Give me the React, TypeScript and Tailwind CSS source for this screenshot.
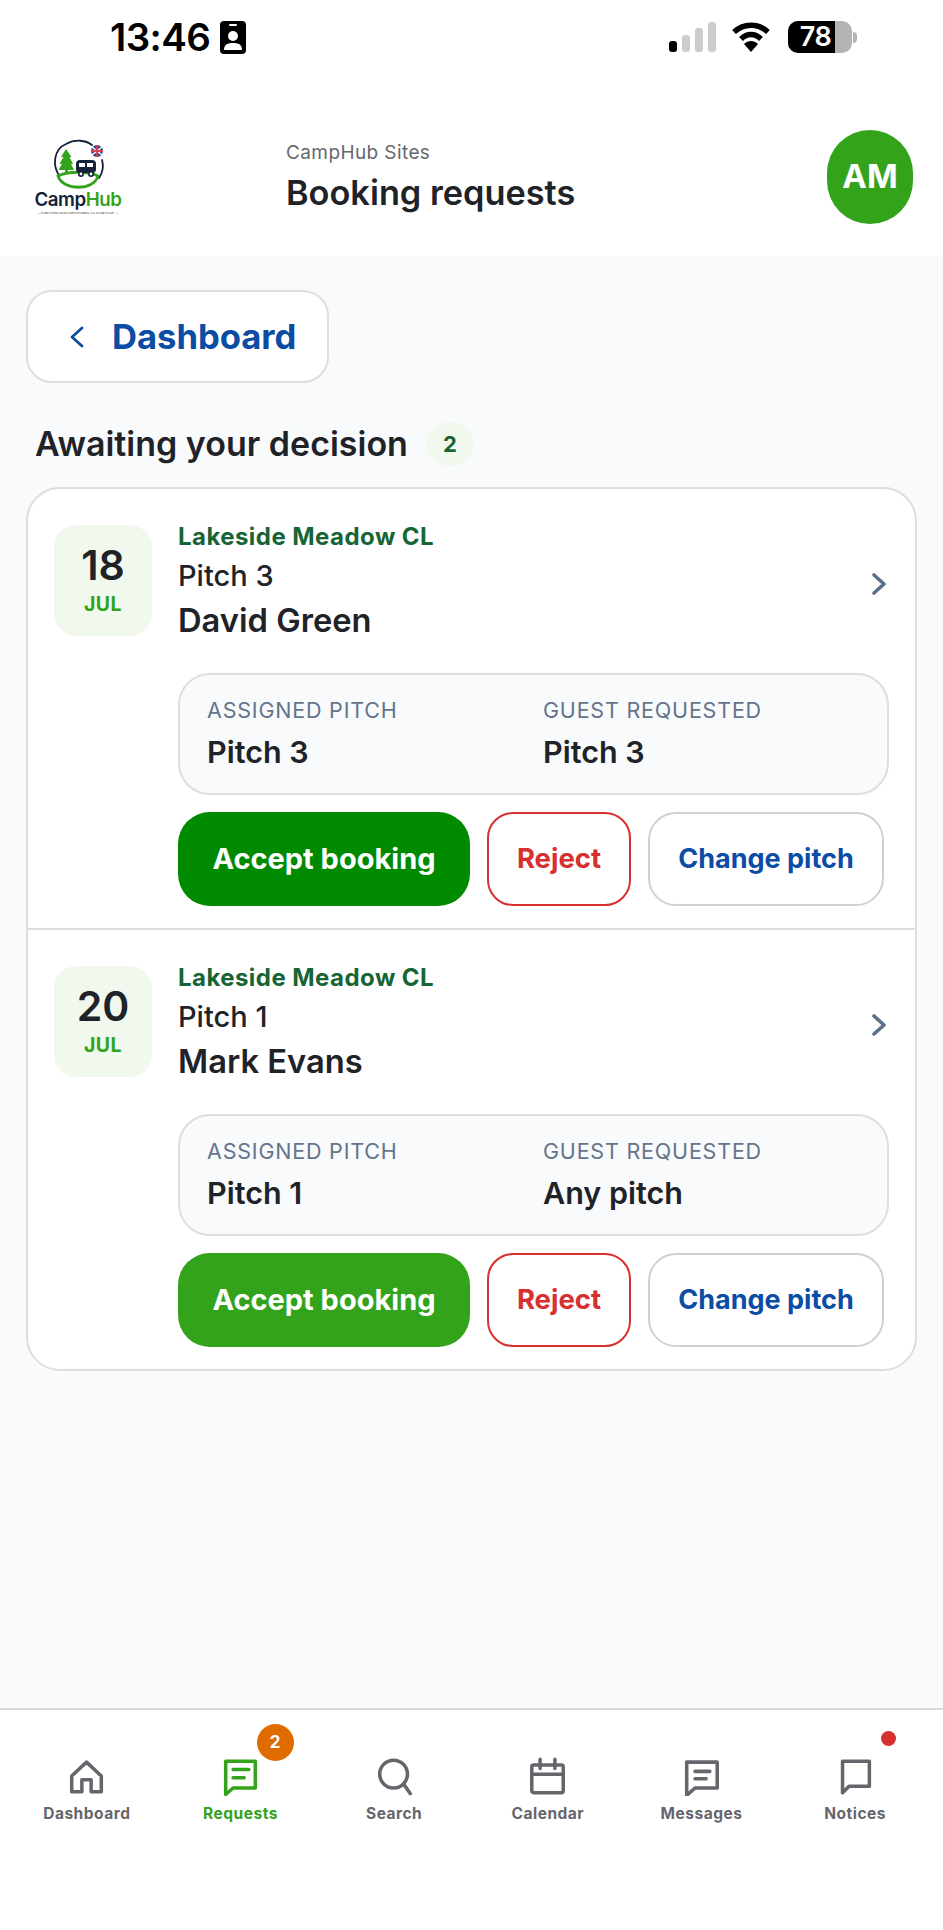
const green = "#33a31b";

function Logo() {
  return (
    <div className="flex w-[96px] flex-col items-center">
      <svg width="54" height="50" viewBox="0 0 54 50" fill="none">
        <path d="M10 39C0 27 3 10 15 5C24 0 35 1 41 6" stroke="#14213a" strokeWidth="1.8" strokeLinecap="round" />
        <path d="M51 21C53 28 52 33 48 39" stroke="#14213a" strokeWidth="1.8" strokeLinecap="round" />
        <path d="M15 10L10 18H12.5L8.5 25H11L7.5 31H14V36H17V31H23L20 25H22L18.5 18H20.5Z" fill={green} />
        <path d="M7 37C16 32 38 32 47 37C43 52 12 52 7 37Z" fill="#fff" stroke={green} strokeWidth="2.8" />
        <rect x="25" y="21" width="20" height="13" rx="4" fill="#14213a" />
        <rect x="28" y="24" width="6" height="4" fill="#fff" />
        <rect x="36" y="24" width="6" height="4" fill="#fff" />
        <circle cx="30" cy="35" r="2.2" fill="#fff" stroke="#14213a" strokeWidth="1.6" />
        <circle cx="40" cy="35" r="2.2" fill="#fff" stroke="#14213a" strokeWidth="1.6" />
        <circle cx="46" cy="12" r="6" fill="#3b4a86" />
        <path d="M41 8L51 16M51 8L41 16" stroke="#fff" strokeWidth="1.4" />
        <path d="M46 6V18M40 12H52" stroke="#d8404f" strokeWidth="1.8" />
      </svg>
      <div className="text-[18.7px] leading-[22px] font-semibold tracking-[-0.4px] text-[#14213a]">
        Camp<span className="text-[#33a31b]">Hub</span>
      </div>
      <div className="text-[2.6px] leading-[5px] whitespace-nowrap text-[#333]">— EVERYTHING YOUR CAMPSITE NEEDS, ALL IN ONE PLACE. —</div>
    </div>
  );
}

function StatusBar() {
  return (
    <div className="flex h-[72px] items-center pt-[2px] pl-[110px]">
      <span className="text-[38.5px] leading-none font-semibold tracking-[-0.6px] text-black">13:46</span>
      <svg className="ml-[10px]" width="26" height="33" viewBox="0 0 26 33">
        <rect width="26" height="33" rx="4" fill="#000" />
        <rect x="9" y="3" width="8" height="2" rx="1" fill="#fff" />
        <circle cx="13" cy="15" r="5" fill="#fff" />
        <path d="M4 29C4 23 8 22 13 22C18 22 22 23 22 29Z" fill="#fff" />
      </svg>
      <div className="ml-auto mr-[86px] flex items-center">
        <svg width="48" height="32" viewBox="0 0 48 32">
          <rect x="1" y="20" width="8" height="11" rx="3" fill="#000" />
          <rect x="14" y="14" width="8" height="17" rx="3" fill="#ccc" />
          <rect x="27" y="7" width="8" height="24" rx="3" fill="#ccc" />
          <rect x="40" y="1" width="8" height="30" rx="3" fill="#ccc" />
        </svg>
        <svg className="ml-[15px]" width="40" height="30" viewBox="0 0 40 30">
          <path d="M3 10C13 1 27 1 37 10" stroke="#000" strokeWidth="5.5" fill="none" />
          <path d="M10 17C16 11 24 11 30 17" stroke="#000" strokeWidth="5.5" fill="none" />
          <path d="M13 22C17 18 23 18 27 22L20 30Z" fill="#000" />
        </svg>
        <div className="relative ml-[17px] flex h-[32px] w-[64px] overflow-hidden rounded-[10px] bg-[#b4b4b4]">
          <div className="flex h-full w-[47px] items-center justify-center bg-black pl-[8px] text-[27px] font-semibold tracking-[-0.5px] text-white">78</div>
        </div>
        <div className="ml-[1px] h-[11px] w-[4px] rounded-r-full bg-[#b4b4b4]" />
      </div>
    </div>
  );
}

function Booking({
  day,
  pitch,
  name,
  requested,
  acceptBg,
  bottomBorder,
}: {
  day: string;
  pitch: string;
  name: string;
  requested: string;
  acceptBg: string;
  bottomBorder?: boolean;
}) {
  return (
    <div className={`pt-[36px] pr-[26px] pl-[26px] ${bottomBorder ? "h-[441px] border-b-2 border-[#dcdee1]" : "h-[439px]"}`}>
      <div className="flex">
        <div className="flex h-[111px] w-[98px] shrink-0 flex-col items-center justify-center rounded-[22px] bg-[#f1f9ee]">
          <div className="text-[41px] leading-[40px] font-semibold text-[#1f2328]">{day}</div>
          <div className="mt-[7px] text-[19.5px] leading-[24px] font-bold tracking-[0.5px] text-[#33a31b]">JUL</div>
        </div>
        <div className="ml-[26px] flex-1">
          <div className="flex items-center justify-between">
            <div>
              <div className="text-[24px] leading-[24px] font-bold tracking-[0.45px] text-[#176534]">Lakeside Meadow CL</div>
              <div className="mt-[10px] text-[29px] leading-[33px] font-medium text-[#1f2328]">{pitch}</div>
              <div className="mt-[8px] text-[32.7px] leading-[40px] font-semibold text-[#1f2328]">{name}</div>
            </div>
            <svg className="mt-[3px] mr-[2px]" width="16" height="24" viewBox="0 0 16 24" fill="none">
              <path d="M3 3L13 12L3 21" stroke="#5d6f88" strokeWidth="3.6" strokeLinecap="round" strokeLinejoin="round" />
            </svg>
          </div>
        </div>
      </div>
      <div className="ml-[124px]">
        <div className="mt-[33px] grid h-[122px] grid-cols-[336px_1fr] content-center rounded-[32px] border-2 border-[#dcdee1] bg-[#f8fafc] pb-[2px] pl-[27px]">
          <div>
            <div className="text-[21.5px] leading-[26px] tracking-[0.8px] text-[#64748b]">ASSIGNED PITCH</div>
            <div className="mt-[11px] text-[30.5px] leading-[36px] font-semibold text-[#1f2328]">{pitch}</div>
          </div>
          <div>
            <div className="text-[21.5px] leading-[26px] tracking-[0.8px] text-[#64748b]">GUEST REQUESTED</div>
            <div className="mt-[11px] text-[30.5px] leading-[36px] font-semibold text-[#1f2328]">{requested}</div>
          </div>
        </div>
        <div className="mt-[17px] flex h-[94px] gap-[17px] font-bold">
          <button className={`w-[292px] rounded-[32px] text-[29px] text-white ${acceptBg}`}>Accept booking</button>
          <button className="w-[144px] rounded-[26px] border-[2.5px] border-[#d63031] bg-white text-[27.5px] text-[#d63031]">Reject</button>
          <button className="w-[236px] rounded-[28px] border-[2.5px] border-[#cfd1d4] bg-white text-[27px] text-[#0b4ca5]">Change pitch</button>
        </div>
      </div>
    </div>
  );
}

const navIcons: Record<string, React.ReactNode> = {
  Dashboard: (
    <>
      <path d="M20 5L36 20V37H25V24H15V37H4V20Z" />
    </>
  ),
  Requests: (
    <>
      <path d="M4 4H36V33H12L4 40Z" />
      <path d="M12 13H29M12 22H24" />
    </>
  ),
  Search: (
    <>
      <circle cx="19" cy="18" r="15" />
      <path d="M30 29L37 39" />
    </>
  ),
  Calendar: (
    <>
      <rect x="3" y="8" width="34" height="30" rx="2" />
      <path d="M3 18H37M12 2V12M28 2V12" />
    </>
  ),
  Messages: (
    <>
      <path d="M4 5H37V33H13L4 41Z" />
      <path d="M13 15H29M13 23H25" />
    </>
  ),
  Notices: (
    <>
      <path d="M6 4H35V31H13L6 38Z" />
    </>
  ),
};

function NavItem({ label, active, children }: { label: string; active?: boolean; children?: React.ReactNode }) {
  return (
    <div className={`relative flex flex-col items-center ${active ? "text-[#33a31b]" : "text-[#64666c]"}`}>
      <svg width="37" height="40" viewBox="0 0 40 40" fill="none" stroke="currentColor" strokeWidth="3.8" strokeLinejoin="round" strokeLinecap="round">
        {navIcons[label]}
      </svg>
      <div className="mt-[8px] text-[15.5px] leading-[20px] font-bold tracking-[0.5px]">{label}</div>
      {children}
    </div>
  );
}

export default function App() {
  return (
    <div className="flex h-[1930px] w-[943px] flex-col overflow-hidden bg-[#f8fafc] font-['Inter',sans-serif]">
      <div className="h-[256px] bg-white">
        <StatusBar />
        <div className="mt-[58px] flex items-center pr-[30px] pl-[30px]">
          <div className="w-[256px]">
            <Logo />
          </div>
          <div>
            <div className="text-[19px] leading-[24px] tracking-[0.4px] text-[#66686c]">CampHub Sites</div>
            <div className="mt-[8px] text-[34.3px] leading-[40px] font-semibold text-[#1f2328]">Booking requests</div>
          </div>
          <div className="ml-auto flex h-[94px] w-[86px] items-center justify-center rounded-full bg-[#33a31b] text-[33px] font-bold text-white">AM</div>
        </div>
      </div>

      <div className="flex-1 px-[26px]">
        <div className="mt-[34px] flex h-[93px] w-[303px] items-center rounded-[26px] border-2 border-[#dcdee1] bg-white pl-[41px]">
          <svg width="16" height="24" viewBox="0 0 16 24" fill="none">
            <path d="M13 3L3 12L13 21" stroke="#0b4ca5" strokeWidth="2.8" strokeLinecap="round" strokeLinejoin="round" />
          </svg>
          <span className="ml-[27px] text-[34.6px] font-bold text-[#0b4ca5]">Dashboard</span>
        </div>

        <div className="mt-[39px] flex items-center pl-[9px]">
          <span className="text-[34px] leading-[44px] font-semibold text-[#1f2328]">Awaiting your decision</span>
          <span className="ml-[18px] flex h-[44px] w-[48px] items-center justify-center rounded-full bg-[#f1f9ee] text-[22px] font-bold text-[#176534]">2</span>
        </div>

        <div className="mt-[21px] w-[891px] overflow-hidden rounded-[34px] border-2 border-[#dcdee1] bg-white">
          <Booking day="18" pitch="Pitch 3" name="David Green" requested="Pitch 3" acceptBg="bg-[#008a00]" bottomBorder />
          <Booking day="20" pitch="Pitch 1" name="Mark Evans" requested="Any pitch" acceptBg="bg-[#33a31b]" />
        </div>
      </div>

      <div className="h-[222px] border-t-2 border-[#d8dadd] bg-white pt-[46px] pr-[11px] pl-[10px]">
        <div className="grid grid-cols-6">
          <NavItem label="Dashboard" />
          <NavItem label="Requests" active>
            <span className="absolute top-[-32px] left-[93px] flex h-[37px] w-[37px] items-center justify-center rounded-full bg-[#e06c00] text-[17px] font-bold text-white">2</span>
          </NavItem>
          <NavItem label="Search" />
          <NavItem label="Calendar" />
          <NavItem label="Messages" />
          <NavItem label="Notices">
            <span className="absolute top-[-25px] left-[103px] h-[15px] w-[15px] rounded-full bg-[#d63031]" />
          </NavItem>
        </div>
      </div>
    </div>
  );
}
